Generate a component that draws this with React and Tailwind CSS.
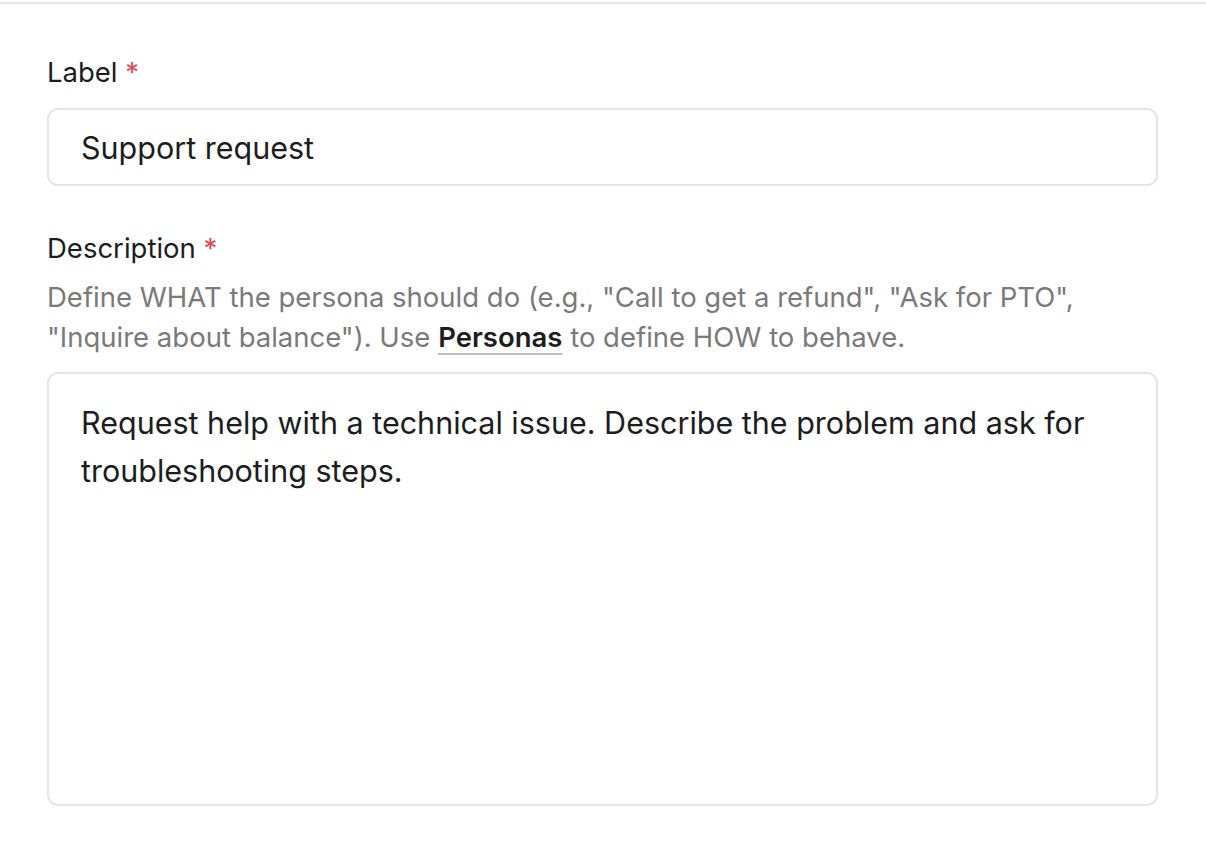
export default function App() {
  return (
    <div className="w-[1206px] h-[864px] bg-white overflow-hidden" style={{ fontFamily: 'Inter, "Noto Sans", sans-serif' }}>
      <div className="h-[2px] mt-[2px] bg-[#e6e6e6]" />
      <div className="pl-[47px] pr-[48px] pt-[50px]">
        <div className="text-[27.5px] leading-[36px] text-[#1d1d1f]">
          Label <span className="text-[#e5484d]">*</span>
        </div>
        <div className="mt-[18px] h-[78px] rounded-[11px] border-2 border-[#e5e5e5] flex items-center px-[32px] pt-[1px] text-[30.5px] text-[#1d1d1f]">
          Support request
        </div>
        <div className="mt-[44px] text-[27.5px] leading-[36px] text-[#1d1d1f]">
          Description <span className="text-[#e5484d]">*</span>
        </div>
        <div className="mt-[11px] max-w-[1090px] text-[27.5px] leading-[40px] text-[#7a7a7a]">
          Define WHAT the persona should do (e.g., "Call to get a refund", "Ask for PTO", "Inquire about balance"). Use{' '}
          <span className="font-semibold text-[#1d1d1f] underline decoration-[#bdbdbd] decoration-2 underline-offset-[6px]">Personas</span> to define HOW to behave.
        </div>
        <div className="mt-[15px] h-[434px] rounded-[11px] border-2 border-[#e5e5e5] px-[32px] pt-[25px] text-[30.5px] leading-[48px] text-[#1d1d1f]">
          Request help with a technical issue. Describe the problem and ask for troubleshooting steps.
        </div>
      </div>
    </div>
  );
}
